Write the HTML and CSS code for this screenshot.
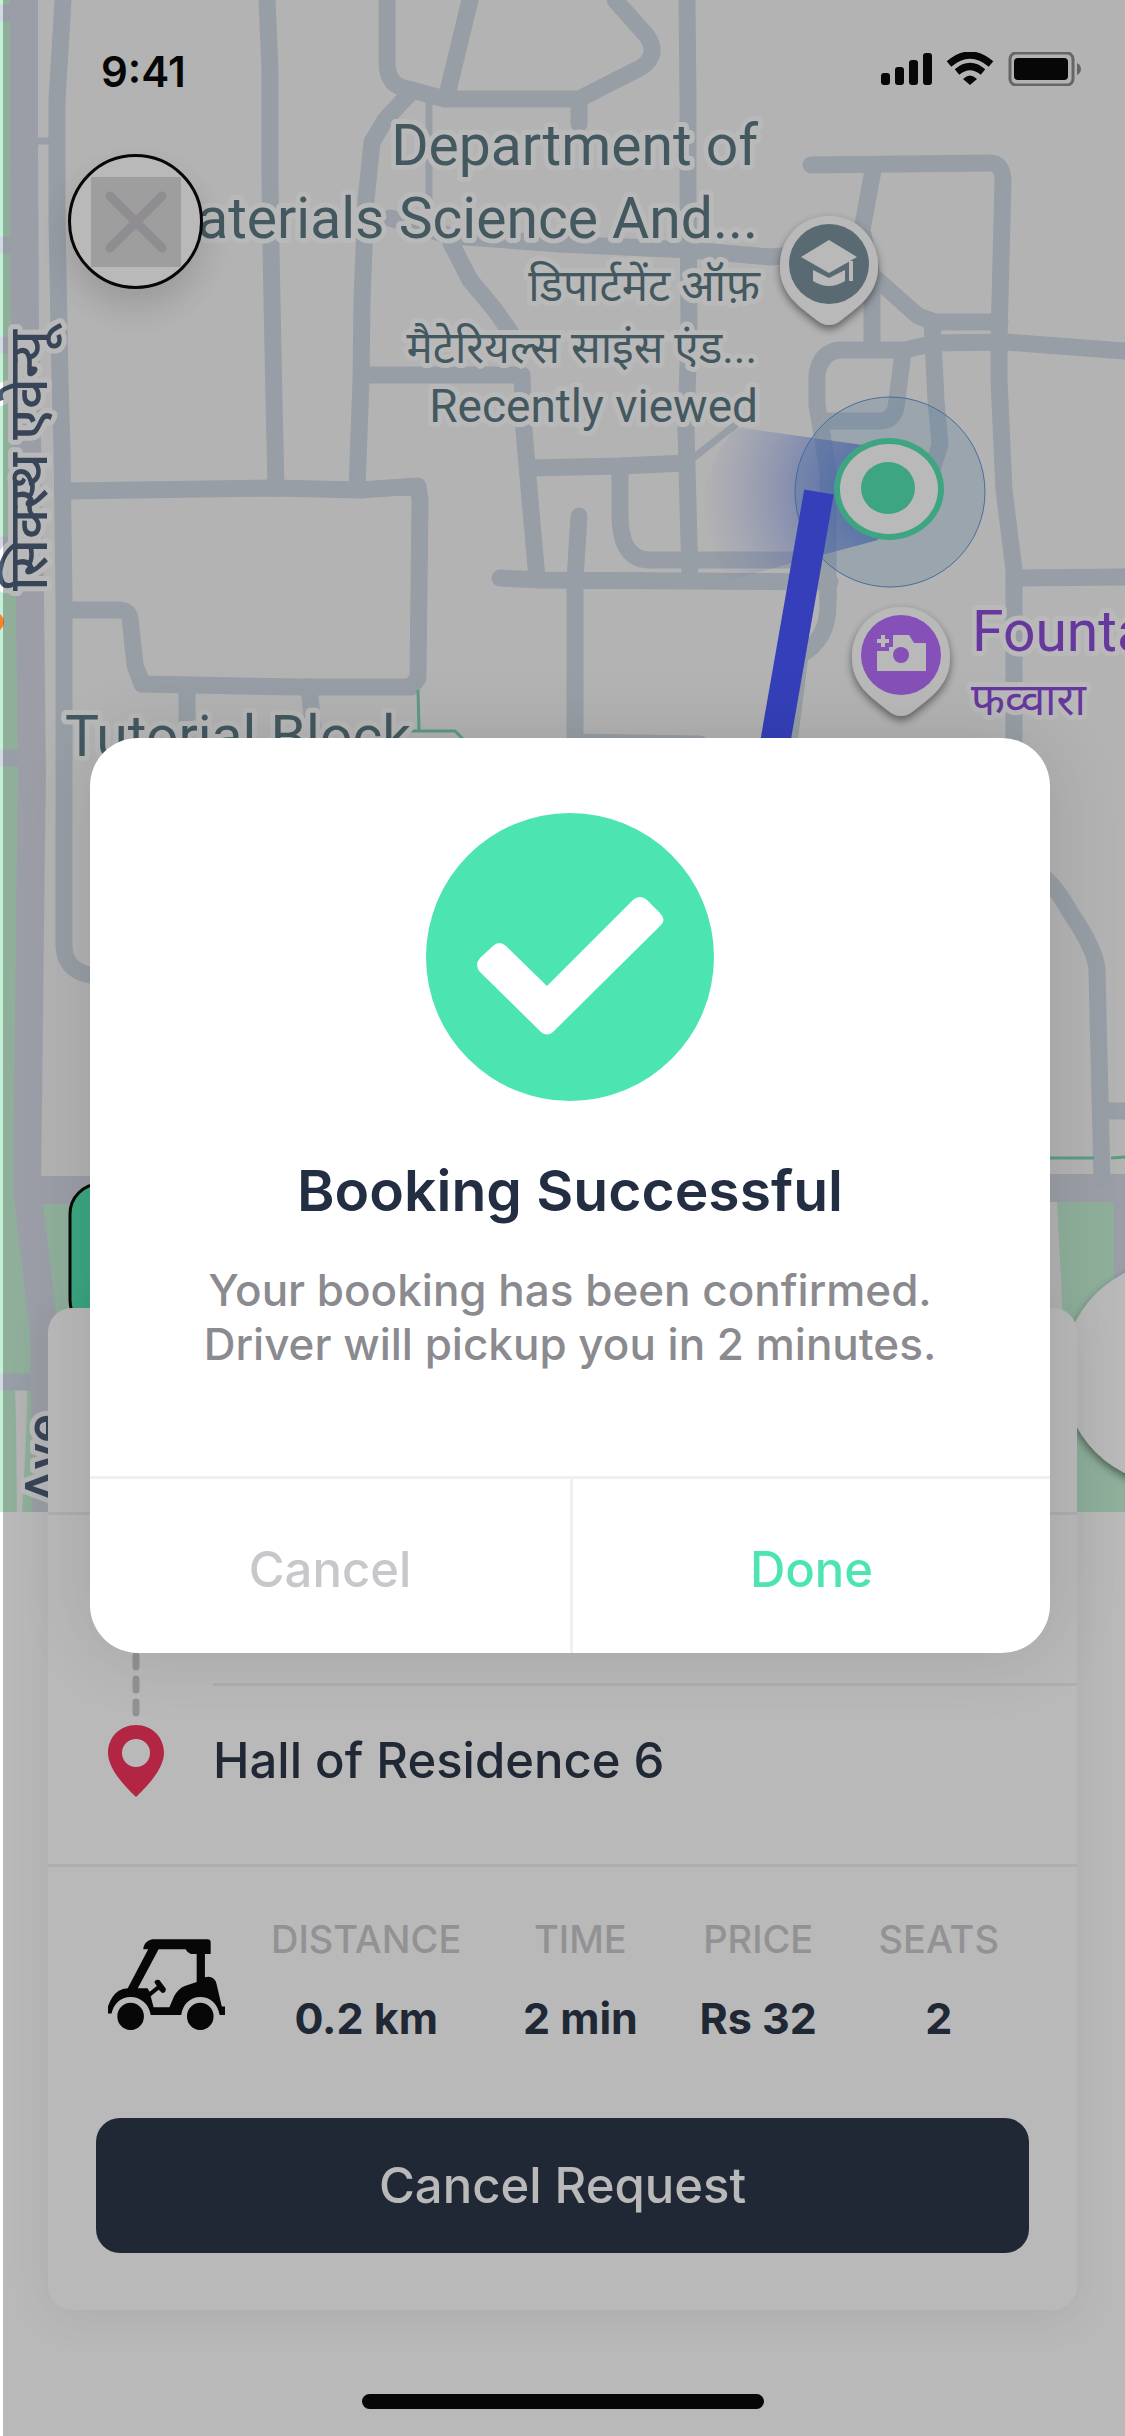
FILE: index.html
```html
<!DOCTYPE html>
<html lang="en">
<head>
<meta charset="utf-8">
<meta name="viewport" content="width=device-width, initial-scale=1">
<title>Booking Successful</title>
<link rel="stylesheet" href="styles.css">
</head>
<body>
<div class="screen">
  <svg class="map" viewBox="0 0 1125 1512" aria-label="Map">
    <defs>
      <radialGradient id="beam" gradientUnits="userSpaceOnUse" cx="890" cy="490" r="190">
        <stop offset="0.2" stop-color="#4a78e0" stop-opacity="0.7"/>
        <stop offset="0.5" stop-color="#5d7fe6" stop-opacity="0.45"/>
        <stop offset="1" stop-color="#8f98f0" stop-opacity="0"/>
      </radialGradient>
      <filter id="drop" x="-30%" y="-30%" width="160%" height="170%">
        <feDropShadow dx="0" dy="4" stdDeviation="4" flood-color="#000" flood-opacity="0.5"/>
      </filter>
    </defs>
    <rect width="1125" height="1512" fill="#f7f7f7"/>
    <!-- parks -->
    <path class="park" d="M0 0H24L30 600L27 1190L44 1330V1512H0Z"/>
    <path class="park" d="M38 1204H130V1512H60Z"/>
    <path class="park" d="M1057 1200H1125V1512H1062V1300Z"/>
    <path d="M15 1389H27V1405L25 1460L22 1512H17L16 1420Z" fill="#f7f7f7"/>
    <g class="road">
      <path d="M0 13H24M0 245H24M0 345H24M0 545H24M0 758H30M0 1382H44"/>
      <path d="M63 0L57 100V220L60 380L62 450L64 600V945Q64 970 90 975L130 978"/>
      <path class="thin" d="M38 141H55M429 100V200M692 459L735 425"/>
      <path d="M267 0L270 70V180L271 250L274 400L276 488"/>
      <path d="M387 0V62Q387 84 404 88L445 99H579L640 68Q660 56 647 36L615 0M579 99V124"/>
      <path d="M470 0L447 95M413 90L385 120L372 142L366 200L362 300L361 380L357 488"/>
      <path d="M451 243L470 280L495 310L511 333M390 218L451 236L560 244L690 250L770 257L795 255"/>
      <path d="M687 0L688 100V190L689 330L686 430L690 580"/>
      <path d="M364 375H522L524 430L530 500L537 578"/>
      <path d="M66 491L275 488L360 490L418 486L420 500L418 678L411 687H300L142 684L135 665L130 618Q128 610 118 610H66"/>
      <path d="M187 687V730M309 687L315 745"/>
      <path d="M530 468L620 466L686 463M620 466V515Q620 560 650 560H828"/>
      <path d="M500 578L540 580L830 582M579 516L575 580V760M575 742L700 744"/>
      <path d="M811 165L990 163Q1002 163 1003 180L999 340V380L1004 490L1014 570V760"/>
      <path d="M874 165L862 230L872 275L918 316L935 322H1000M872 275V345"/>
      <path d="M828 600L828 470L817 405V375Q820 352 840 350H905L935 343L1005 342L1125 351"/>
      <path d="M903 352L896 408Q892 421 880 421H822M932 322L936 400L940 445L930 475"/>
      <path d="M828 580V605Q828 640 800 655L790 735M1014 578L1125 577"/>
      <path class="broad" d="M24 0V150L25 330L30 600L32 780L31 840L27 1190L44 1330L46 1512M27 1190H130M1040 1188H1125M1128 1190V1290"/>
      <path d="M1045 878Q1058 890 1070 912Q1096 950 1097 970L1102 1180M1102 1111H1125"/>
    </g>
    <path d="M418 690L419 731M405 731H455L466 742M1040 1158H1094M1111 1158L1125 1157" fill="none" stroke="#7cd3b2" stroke-width="3"/>
    <circle cx="-6" cy="622" r="10" fill="#ff8126"/>

    <g class="place" text-anchor="end">
      <text x="758" y="165" class="large">Department of</text>
      <text x="758" y="238" class="large">Materials Science And...</text>
      <text x="760" y="301">डिपार्टमेंट ऑफ़</text>
      <text x="757" y="363">मैटेरियल्स साइंस एंड...</text>
      <text x="758" y="422" class="visited">Recently viewed</text>
    </g>
    <text x="65" y="756" class="place large">Tutorial Block</text>
    <text x="972" y="651" class="place large sight">Fountain</text>
    <text x="971" y="715" class="place sight">फव्वारा</text>
    <text transform="translate(47 591) rotate(-90)" class="place street">सिक्स्थ एवेन्यू</text>
    <text transform="translate(63 1504) rotate(-90)" class="place street">Ave</text>

    <!-- user heading and accuracy -->
    <circle cx="890" cy="492" r="95" fill="#6ba7dc" fill-opacity="0.25" stroke="#5c94d0" stroke-width="1"/>
    <path d="M735 427L870 446L890 490L878 540L715 584Q680 500 735 427Z" fill="url(#beam)"/>
    <path d="M819 492L766 795" stroke="#4351ff" stroke-width="30"/>
    <ellipse cx="889" cy="489" rx="55" ry="51" fill="#50e3b0"/>
    <ellipse cx="889" cy="489" rx="49" ry="45" fill="#fff"/>
    <ellipse cx="888" cy="488" rx="27" ry="26" fill="#50e3b0"/>

    <!-- place pins -->
    <g transform="translate(829 264)">
      <path d="M0-48C28-48 49-26 49 2C49 30 30 42 11 57Q0 65-11 57C-30 42-49 30-49 2C-49-26-28-48 0-48Z" fill="#fff" filter="url(#drop)"/>
      <circle r="40" fill="#788f9b"/>
      <path d="M-28-7L0-24L28-7L0 9ZM-16 6L0 14L16 6V17Q0 27-16 17ZM20-3H24V17H20Z" fill="#fff"/>
    </g>
    <g transform="translate(901 655)">
      <path d="M0-48C28-48 49-26 49 2C49 30 30 42 11 57Q0 65-11 57C-30 42-49 30-49 2C-49-26-28-48 0-48Z" fill="#fff" filter="url(#drop)"/>
      <circle r="40" fill="#b56afe"/>
      <path d="M-8-20H8L13-12H25V16H-24V-4H-12V-8H-8Z" fill="#fff"/>
      <path d="M-18-20V-8M-24-14H-12" stroke="#fff" stroke-width="4"/>
      <circle r="8" fill="#b56afe"/>
    </g>

    <rect x="70" y="1184" width="300" height="146" rx="30" fill="#4ce5b1" stroke="#000" stroke-width="3"/>
    <circle cx="1175" cy="1373" r="112" fill="#fff" filter="url(#drop)"/>
  </svg>

  <header class="status">
    <span class="clock">9:41</span>
    <svg width="200" height="34" viewBox="881 52 200 34" aria-hidden="true">
      <g><rect x="881" y="73" width="9" height="12" rx="3"/><rect x="895" y="67" width="9" height="18" rx="3"/><rect x="909" y="60" width="9" height="25" rx="3"/><rect x="923" y="53" width="9" height="32" rx="3"/></g>
      <g fill="none" stroke="#000" stroke-width="7"><path d="M949 64Q970 46 991 64"/><path d="M957 72Q970 61 983 72"/></g>
      <path d="M963 79Q970 72 977 79L970 85Z"/>
      <rect x="1010" y="53" width="63" height="32" rx="6" fill="none" stroke="#000" stroke-opacity="0.45" stroke-width="3"/>
      <rect x="1014" y="58" width="54" height="22" rx="4"/>
      <path d="M1077 63Q1081 65 1081 69T1077 75Z" opacity="0.45"/>
    </svg>
  </header>
  <button class="close" type="button" aria-label="Close">
    <svg width="90" height="90" viewBox="0 0 90 90"><rect width="90" height="90" fill="#d9d9d9"/><path d="M19 19L71 71M71 19L19 71" stroke="#c3c0c8" stroke-width="9" stroke-linecap="round"/></svg>
  </button>

  <section class="sheet">
    <div class="sheet-top"></div>
    <div class="route">
      <div class="rail">
        <svg width="56" height="76" viewBox="0 0 56 76"><path d="M28 7V76" stroke="#c8c7cc" stroke-width="7" stroke-linecap="round" stroke-dasharray="11 12"/></svg>
        <svg width="56" height="72" viewBox="0 0 56 72"><path fill="#f52d56" fill-rule="evenodd" d="M28 0C44 0 56 12 56 28C56 41 44 57 28 72C12 57 0 41 0 28C0 12 12 0 28 0ZM28 14A14 14 0 1 0 28 42A14 14 0 1 0 28 14Z"/></svg>
      </div>
      <div class="origin"></div>
      <div class="destination">Hall of Residence 6</div>
    </div>
    <div class="trip">
      <svg class="cart" width="117" height="91" viewBox="0 0 117 91" aria-hidden="true">
        <g transform="scale(.359 .367) translate(-301 -218)">
          <path d="M399 246Q402 224 424 219H578Q587 219 587 228V259H571V322Q596 316 603 339L618 402H627V425H612C606 392 584 376 558 376C530 376 509 396 505 425H420C416 396 392 376 364 376C336 376 316 396 311 421H301V401Q312 372 330 360Q342 352 356 352L413 246ZM442 246L384 352H411L417 362L437 346L430 336Q432 326 444 330L462 353Q463 364 452 365L442 356L420 374L428 404H472L485 374Q497 353 515 346L548 335V259H532Q522 256 517 246Z" fill-rule="evenodd"/>
          <circle cx="364" cy="429" r="37"/><circle cx="558" cy="429" r="37"/>
        </g>
      </svg>
      <dl class="facts">
        <div><dt>DISTANCE</dt><dd>0.2 km</dd></div>
        <div><dt>TIME</dt><dd>2 min</dd></div>
        <div><dt>PRICE</dt><dd>Rs 32</dd></div>
        <div><dt>SEATS</dt><dd>2</dd></div>
      </dl>
    </div>
    <button class="cancel-request" type="button">Cancel Request</button>
  </section>
  <div class="home-indicator"></div>

  <div class="scrim">
    <div class="dialog" role="dialog" aria-modal="true" aria-labelledby="dialog-title">
      <div class="dialog-body">
        <svg width="288" height="288" viewBox="0 0 288 288" aria-hidden="true"><circle cx="144" cy="144" r="144" fill="#4ce5b1"/><path fill="#fff" d="M54 145L67 133Q73 127 80 133L121 173L207 87Q214 81 221 87L234 100Q241 107 234 113L127 219Q121 224 115 219L54 159Q48 152 54 145Z"/></svg>
        <h1 id="dialog-title">Booking Successful</h1>
        <p>Your booking has been confirmed.<br>Driver will pickup you in 2 minutes.</p>
      </div>
      <div class="dialog-actions">
        <button type="button">Cancel</button>
        <button type="button" class="done">Done</button>
      </div>
    </div>
  </div>
</div>
</body>
</html>
```

FILE: styles.css
```css
* {
  box-sizing: border-box;
}

body {
  margin: 0;
  background: #fff;
  font-family: "Inter", "Noto Sans", sans-serif;
  color: #242e42;
}

button {
  border: 0;
  padding: 0;
  background: none;
  font: inherit;
}

svg {
  display: block;
  flex: none;
}

.screen {
  position: relative;
  display: flex;
  flex-direction: column;
  min-height: 100vh;
  overflow: hidden;
}

/* Map */
.map {
  position: absolute;
  top: 0;
  left: 0;
  width: 100%;
}

.park {
  fill: #c3f1d5;
}

.road {
  fill: none;
  stroke: #cfd8e3;
  stroke-width: 17;
  stroke-linejoin: round;
  stroke-linecap: round;
}

.road .thin {
  stroke-width: 7;
}

.road .broad {
  stroke: #d5d9e4;
  stroke-width: 28;
}

.place {
  font-family: "Roboto", "Noto Sans Devanagari", "Noto Sans", sans-serif;
  font-size: 44px;
  fill: #57747f;
  stroke: #fff;
  stroke-width: 10px;
  stroke-linejoin: round;
  paint-order: stroke;
}

.large {
  font-size: 57px;
}

.visited {
  font-size: 46px;
}

.sight {
  fill: #8847d9;
}

.street {
  font-size: 54px;
  font-weight: 500;
  fill: #475a74;
}

/* Top of the screen */
.status {
  position: relative;
  display: flex;
  align-items: center;
  justify-content: space-between;
  padding: 45px 44px 0 101px;
  color: #000;
}

.status svg {
  margin-bottom: 6px;
}

.clock {
  font-size: 42px;
  font-weight: 600;
  line-height: 54px;
}

.close {
  position: relative;
  display: flex;
  align-items: center;
  justify-content: center;
  width: 135px;
  height: 135px;
  margin: 55px 0 0 68px;
  border: 3px solid #000;
  border-radius: 50%;
  background: #fff;
  box-shadow: 0 18px 36px rgba(0, 0, 0, 0.15);
}

/* Ride sheet */
.sheet {
  position: relative;
  margin: auto 48px 84px;
  padding-bottom: 57px;
  border-radius: 24px;
  background: #fff;
  box-shadow: 0 6px 45px rgba(0, 0, 0, 0.08);
}

.sheet-top {
  height: 207px;
  border-bottom: 3px solid #efeff4;
}

.route {
  display: grid;
  grid-template-columns: 165px 1fr;
  grid-template-rows: 171px 178px;
  border-bottom: 3px solid #efeff4;
}

.rail {
  grid-row: 1 / 3;
  display: flex;
  flex-direction: column;
  justify-content: flex-end;
  padding: 0 0 67px 60px;
}

.origin {
  border-bottom: 3px solid #efeff4;
}

.destination {
  padding-top: 45px;
  font-size: 49px;
  font-weight: 500;
  line-height: 60px;
}

.trip {
  display: flex;
  align-items: flex-start;
  gap: 46px;
  padding: 48px 78px 75px 60px;
}

.cart {
  margin-top: 24px;
}

.facts {
  flex: 1;
  display: flex;
  justify-content: space-between;
  margin: 0;
}

.facts div {
  text-align: center;
}

.facts dt {
  font-size: 38px;
  line-height: 48px;
  color: #c8c7cc;
  font-weight: 500;
}

.facts dd {
  margin: 30px 0 0;
  font-size: 43px;
  line-height: 50px;
  font-weight: 700;
}

.cancel-request {
  display: block;
  width: calc(100% - 96px);
  height: 135px;
  margin: 0 48px;
  border-radius: 24px;
  background: #242e42;
  color: #fff;
  font-size: 49px;
  font-weight: 500;
}

.home-indicator {
  position: relative;
  width: 402px;
  height: 15px;
  margin: 0 auto 27px;
  border-radius: 8px;
  background: #000;
}

/* Dialog */
.scrim {
  position: absolute;
  inset: 0 0 0 3px;
  padding: 738px 75px 0 87px;
  background: rgba(23, 23, 23, 0.3);
}

.dialog {
  border-radius: 48px;
  background: #fff;
  box-shadow: 0 0 75px rgba(0, 0, 0, 0.12);
}

.dialog-body {
  display: flex;
  flex-direction: column;
  align-items: center;
  padding: 75px 48px 105px;
  text-align: center;
}

.dialog h1 {
  margin: 54px 0 36px;
  font-size: 57px;
  font-weight: 600;
  line-height: 72px;
}

.dialog p {
  margin: 0;
  font-size: 44px;
  font-weight: 500;
  line-height: 54px;
  color: #8a8a8f;
}

.dialog-actions {
  display: grid;
  grid-template-columns: 1fr 1fr;
  border-top: 3px solid #efeff4;
}

.dialog-actions button {
  height: 174px;
  padding-top: 6px;
  color: #c8c7cc;
  font-size: 49px;
  font-weight: 500;
}

.dialog-actions .done {
  border-left: 3px solid #efeff4;
  color: #4ce5b1;
}
```
